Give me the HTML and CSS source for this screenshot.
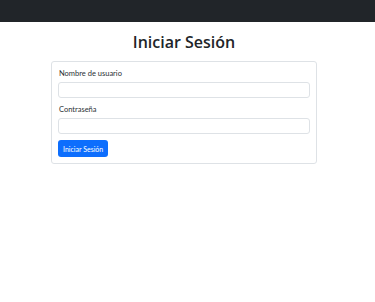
FILE: index.html
```html
<!DOCTYPE html>
<html lang="es">

<head>
  <meta charset="utf-8">
  <title>Iniciar Sesión</title>
  <meta name="viewport" content="width=device-width, initial-scale=1">
  <link rel="stylesheet" href="styles.css">
</head>

<body>
  <nav class="navbar"></nav>

  <div class="container">
    <h1 class="title">Iniciar Sesión</h1>
    <form class="card">
      <div class="group">
        <label for="username">Nombre de usuario</label>
        <input type="text" name="username" id="username" class="form-control">
      </div>
      <div class="group">
        <label for="password">Contraseña</label>
        <input type="password" name="password" id="password" class="form-control">
      </div>
      <button type="submit" class="btn btn-primary">Iniciar Sesión</button>
    </form>
  </div>
</body>

</html>
```

FILE: styles.css
```css
body {
  margin: 0;
  background-color: #fff;
  color: #212529;
  font-family: Lato, 'Open Sans', 'Liberation Sans', sans-serif;
  font-size: 7.5px;
  line-height: 11px;
}

.navbar {
  height: 22px;
  background-color: #212529;
}

.container {
  padding: 0 58px 0 51px;
}

.title {
  margin: 11px 0 9px;
  text-align: center;
  font-family: 'Open Sans', 'Noto Sans', sans-serif;
  font-size: 16px;
  font-weight: 600;
  line-height: 1.2;
}

.card {
  display: flex;
  flex-direction: column;
  padding: 6px;
  border: 1px solid #dee2e6;
  border-radius: 3px;
}

.group {
  display: flex;
  flex-direction: column;
  margin-bottom: 6px;
}

.group label {
  margin: 0 0 3px 1px;
  color: #2b3035;
}

.form-control {
  box-sizing: border-box;
  height: 16px;
  padding: 2px 5px;
  border: 1px solid #dee2e6;
  border-radius: 3px;
  font-size: 7px;
}

.btn {
  align-self: flex-start;
  height: 17px;
  padding: 0 5px;
  border: none;
  border-radius: 3px;
  font-family: inherit;
  font-size: 7px;
}

.btn-primary {
  background-color: #0d6efd;
  color: #fff;
}
```
